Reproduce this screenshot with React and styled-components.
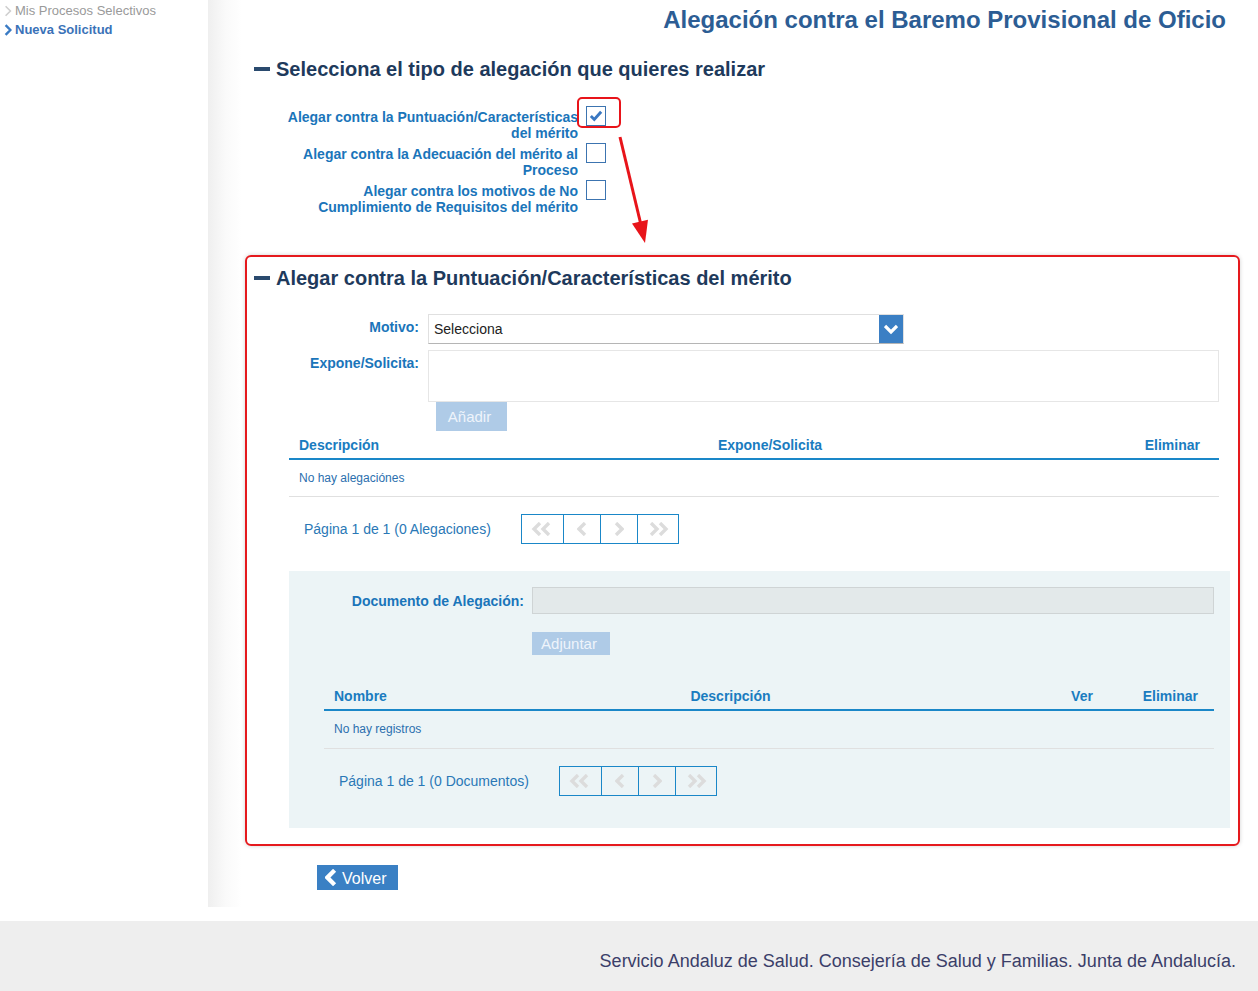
import React from "react";
import styled, { createGlobalStyle } from "styled-components";

const GlobalStyle = createGlobalStyle`
    body {
        margin: 0;
        background: #fff;
        font-family: "Liberation Sans", Arial, sans-serif;
    }
`;

const Chevron = ({ dir = "right", color = "#ddd", w = 10, h = 14, sw = 3 }) => {
    const pts = dir === "right" ? "2,1 8,7 2,13" : dir === "left" ? "8,1 2,7 8,13" : "1,3 7,9 13,3";
    const vb = dir === "down" ? "0 0 14 12" : "0 0 10 14";
    return (
        <svg width={w} height={h} viewBox={vb}>
            <polyline points={pts} fill="none" stroke={color} strokeWidth={sw} strokeLinejoin="miter" />
        </svg>
    );
};

const DoubleChevron = ({ dir }) => (
    <svg width="22" height="14" viewBox="0 0 22 14">
        {dir === "left" ? (
            <>
                <polyline points="9,1 3,7 9,13" fill="none" stroke="#dcdcdc" strokeWidth="3.4" />
                <polyline points="18,1 12,7 18,13" fill="none" stroke="#dcdcdc" strokeWidth="3.4" />
            </>
        ) : (
            <>
                <polyline points="4,1 10,7 4,13" fill="none" stroke="#dcdcdc" strokeWidth="3.4" />
                <polyline points="13,1 19,7 13,13" fill="none" stroke="#dcdcdc" strokeWidth="3.4" />
            </>
        )}
    </svg>
);

const Pager = ({ label }) => (
    <PagerRow>
        <PagerText>{label}</PagerText>
        <PagerGroup>
            <PagerButton $w={41}>
                <DoubleChevron dir="left" />
            </PagerButton>
            <PagerButton $w={37}>
                <Chevron dir="left" color="#dcdcdc" sw={3.4} />
            </PagerButton>
            <PagerButton $w={37}>
                <Chevron dir="right" color="#dcdcdc" sw={3.4} />
            </PagerButton>
            <PagerButton $w={41}>
                <DoubleChevron dir="right" />
            </PagerButton>
        </PagerGroup>
    </PagerRow>
);

const App = () => {
    return (
        <>
            <GlobalStyle />
            <Top>
                <Sidebar>
                    <NavItem>
                        <Chevron dir="right" color="#cfcfcf" w={8} h={12} sw={2} />
                        Mis Procesos Selectivos
                    </NavItem>
                    <NavItem $active>
                        <Chevron dir="right" color="#3a7bc4" w={8} h={12} sw={3} />
                        Nueva Solicitud
                    </NavItem>
                </Sidebar>
                <Main>
                    <Title>Alegación contra el Baremo Provisional de Oficio</Title>

                    <SectionHeading $pad={9} $top={23}>
                        <Dash />
                        Selecciona el tipo de alegación que quieres realizar
                    </SectionHeading>
                    <CheckList>
                        <CheckLabel>Alegar contra la Puntuación/Características del mérito</CheckLabel>
                        <CheckBox>
                            <svg width="14" height="12" viewBox="0 0 16 14">
                                <polyline points="2,7 6,11 14,2" fill="none" stroke="#3a78c2" strokeWidth="3.4" />
                            </svg>
                        </CheckBox>
                        <CheckLabel>Alegar contra la Adecuación del mérito al Proceso</CheckLabel>
                        <CheckBox />
                        <CheckLabel>Alegar contra los motivos de No Cumplimiento de Requisitos del mérito</CheckLabel>
                        <CheckBox />
                    </CheckList>

                    <Highlight />
                    <Arrow width="50" height="120" viewBox="0 0 50 120">
                        <line x1="10" y1="7" x2="31" y2="95" stroke="#e8141a" strokeWidth="3" />
                        <polygon points="35,113 38,89.7 22,93.5" fill="#e8141a" />
                    </Arrow>

                    <MarkedBox>
                        <SectionHeading $pad={7} $top={0}>
                            <Dash />
                            Alegar contra la Puntuación/Características del mérito
                        </SectionHeading>
                        <FormGrid>
                            <FieldLabel>Motivo:</FieldLabel>
                            <Select>
                                <SelectText>Selecciona</SelectText>
                                <SelectArrow>
                                    <Chevron dir="down" color="#fff" w={14} h={12} sw={3.2} />
                                </SelectArrow>
                            </Select>
                            <FieldLabel>Expone/Solicita:</FieldLabel>
                            <Field>
                                <TextArea />
                                <GhostButton $w={71} $h={29} $ml={8}>
                                    Añadir
                                </GhostButton>
                            </Field>
                        </FormGrid>

                        <Table $cols="142px 1fr 110px" $ml={42} $mr={11}>
                            <HeadRow>
                                <HeadCell>Descripción</HeadCell>
                                <HeadCell $align="center">Expone/Solicita</HeadCell>
                                <HeadCell $align="right" $pr={19}>
                                    Eliminar
                                </HeadCell>
                            </HeadRow>
                            <EmptyRow>No hay alegaciónes</EmptyRow>
                            <Pager label="Página 1 de 1 (0 Alegaciones)" />
                        </Table>

                        <DocPanel>
                            <DocRow>
                                <FieldLabel $center>Documento de Alegación:</FieldLabel>
                                <DocInput />
                            </DocRow>
                            <GhostButton $w={78} $h={23} $ml={243} $mt={18}>
                                Adjuntar
                            </GhostButton>
                            <Table $cols="87px 1fr 64px 100px" $ml={35} $mr={0} $mt={27}>
                                <HeadRow>
                                    <HeadCell>Nombre</HeadCell>
                                    <HeadCell $align="center">Descripción</HeadCell>
                                    <HeadCell $align="center">Ver</HeadCell>
                                    <HeadCell $align="right" $pr={16}>
                                        Eliminar
                                    </HeadCell>
                                </HeadRow>
                                <EmptyRow $pb={12}>No hay registros</EmptyRow>
                                <Pager label="Página 1 de 1 (0 Documentos)" />
                            </Table>
                        </DocPanel>
                    </MarkedBox>

                    <BackButton>
                        <Chevron dir="left" color="#fff" w={12} h={17} sw={3.6} />
                        Volver
                    </BackButton>
                </Main>
            </Top>
            <Footer>Servicio Andaluz de Salud. Consejería de Salud y Familias. Junta de Andalucía.</Footer>
        </>
    );
};

const Top = styled.div`
    display: flex;
`;
const Sidebar = styled.nav`
    width: 208px;
    flex-shrink: 0;
    padding: 1px 0 0 4px;
    box-sizing: border-box;
`;
const NavItem = styled.div`
    display: flex;
    align-items: center;
    gap: 3px;
    font-size: 13px;
    line-height: 19px;
    color: ${(p) => (p.$active ? "#3a72b8" : "#9a9a9a")};
    font-weight: ${(p) => (p.$active ? 700 : 400)};
`;
const Main = styled.main`
    flex: 1;
    position: relative;
    padding: 6px 18px 17px 37px;
    background: linear-gradient(to right, #efefef 0, #fafafa 18px, #fff 34px);
`;
const Title = styled.h1`
    margin: 0 14px 0 0;
    text-align: right;
    font-size: 24px;
    line-height: 28px;
    font-weight: 700;
    color: #2c5d94;
`;
const SectionHeading = styled.h2`
    display: flex;
    align-items: center;
    gap: 6px;
    margin: ${(p) => p.$top}px 0 0;
    padding-left: ${(p) => p.$pad}px;
    font-size: 20px;
    line-height: 24px;
    font-weight: 700;
    color: #1e3a5c;
`;
const Dash = styled.span`
    display: inline-block;
    width: 16px;
    height: 4px;
    background: #2a4a6e;
`;
const CheckList = styled.div`
    display: grid;
    grid-template-columns: 333px 20px;
    column-gap: 8px;
    row-gap: 5px;
    margin-top: 28px;
`;
const CheckLabel = styled.label`
    text-align: right;
    font-size: 14px;
    line-height: 16px;
    font-weight: 700;
    color: #1a75ba;
    padding-left: 38px;
`;
const CheckBox = styled.span`
    width: 20px;
    height: 20px;
    box-sizing: border-box;
    margin-top: -3px;
    border: 1px solid #3c74b0;
    background: #fff;
    display: flex;
    align-items: center;
    justify-content: center;
`;
const Highlight = styled.div`
    position: absolute;
    left: 369px;
    top: 97px;
    width: 44px;
    height: 31px;
    box-sizing: border-box;
    border: 2px solid #e8141a;
    border-radius: 5px;
`;
const Arrow = styled.svg`
    position: absolute;
    left: 402px;
    top: 130px;
`;
const MarkedBox = styled.section`
    margin-top: 40px;
    border: 2px solid #e5191d;
    border-radius: 6px;
    padding: 9px 8px 16px 0;
    box-shadow: 0 0 4px rgba(0, 0, 0, 0.18);
`;
const FormGrid = styled.div`
    display: grid;
    grid-template-columns: 172px 1fr;
    column-gap: 9px;
    row-gap: 6px;
    margin: 24px 11px 0 0;
`;
const FieldLabel = styled.label`
    text-align: right;
    font-size: 14px;
    line-height: 16px;
    font-weight: 700;
    color: #1a75ba;
    padding-top: ${(p) => (p.$center ? 0 : 5)}px;
    align-self: ${(p) => (p.$center ? "center" : "start")};
`;
const Select = styled.div`
    width: 476px;
    height: 30px;
    box-sizing: border-box;
    display: flex;
    align-items: center;
    border: 1px solid #e0e0e0;
    border-bottom-color: #b5b5b5;
`;
const SelectText = styled.span`
    flex: 1;
    padding-left: 5px;
    font-size: 14px;
    color: #222;
`;
const SelectArrow = styled.span`
    width: 24px;
    height: 100%;
    background: #3b7fc4;
    display: flex;
    align-items: center;
    justify-content: center;
`;
const Field = styled.div`
    display: flex;
    flex-direction: column;
    align-items: flex-start;
`;
const TextArea = styled.div`
    width: 100%;
    height: 52px;
    box-sizing: border-box;
    border: 1px solid #e6e6e6;
`;
const GhostButton = styled.button`
    width: ${(p) => p.$w}px;
    height: ${(p) => p.$h}px;
    margin: ${(p) => p.$mt || 0}px 0 0 ${(p) => p.$ml}px;
    padding: 0 4px 0 0;
    border: none;
    background: #afcbe7;
    color: #eef4fb;
    font-family: inherit;
    font-size: 15px;
    display: block;
`;
const Table = styled.div`
    --cols: ${(p) => p.$cols};
    margin: ${(p) => p.$mt || 0}px ${(p) => p.$mr}px 0 ${(p) => p.$ml}px;
`;
const HeadRow = styled.div`
    display: grid;
    grid-template-columns: var(--cols);
    border-bottom: 2px solid #1a87c8;
`;
const HeadCell = styled.div`
    padding: 6px ${(p) => p.$pr || 10}px 5px 10px;
    text-align: ${(p) => p.$align || "left"};
    font-size: 14px;
    line-height: 16px;
    font-weight: 700;
    color: #1a7cc0;
`;
const EmptyRow = styled.div`
    padding: 11px 10px ${(p) => p.$pb || 11}px;
    font-size: 12px;
    line-height: 14px;
    color: #2b6fae;
    border-bottom: 1px solid #e0e0e0;
`;
const PagerRow = styled.div`
    display: flex;
    align-items: center;
    gap: 30px;
    margin-top: 17px;
    padding-left: 15px;
`;
const PagerText = styled.span`
    font-size: 14px;
    color: #2a78b6;
`;
const PagerGroup = styled.div`
    display: flex;
    height: 30px;
    border: 1px solid #1a87c8;
    box-sizing: border-box;
`;
const PagerButton = styled.span`
    width: ${(p) => p.$w}px;
    display: flex;
    align-items: center;
    justify-content: center;
    box-sizing: border-box;
    & + & {
        border-left: 1px solid #1a87c8;
    }
`;
const DocPanel = styled.div`
    margin: 27px 0 0 42px;
    padding: 16px 16px 32px 0;
    background: #ecf4f6;
`;
const DocRow = styled.div`
    display: grid;
    grid-template-columns: 235px 1fr;
    column-gap: 8px;
`;
const DocInput = styled.div`
    height: 27px;
    box-sizing: border-box;
    border: 1px solid #cfd4d5;
    background: #e3e9ea;
`;
const BackButton = styled.button`
    display: flex;
    align-items: center;
    gap: 5px;
    margin: 19px 0 0 72px;
    height: 25px;
    padding: 3px 12px 0 8px;
    border: none;
    background: #3a80c4;
    color: #fff;
    font-family: inherit;
    font-size: 16px;
    & svg {
        margin-top: -3px;
    }
`;
const Footer = styled.footer`
    margin-top: 14px;
    height: 70px;
    box-sizing: border-box;
    background: #eeeeee;
    display: flex;
    align-items: flex-start;
    justify-content: flex-end;
    padding: 30px 22px 0 0;
    font-size: 18px;
    line-height: 20px;
    color: #3b3e69;
`;

export default App;
